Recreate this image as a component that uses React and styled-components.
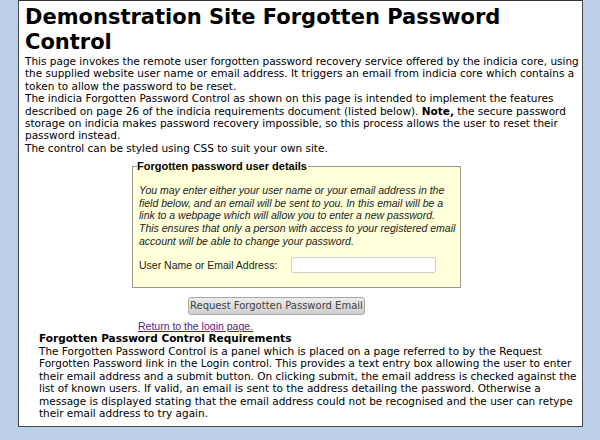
import React from 'react'
import styled, { createGlobalStyle } from 'styled-components'

const GlobalStyle = createGlobalStyle`
  html, body {
    margin: 0;
    padding: 0;
    background: #bccfe9;
  }
  body {
    font-family: "DejaVu Sans", sans-serif;
  }
`

const Page = styled.div`
  width: 600px;
  height: 440px;
  overflow: hidden;
`

const Panel = styled.div`
  margin-left: 18px;
  width: 555px;
  background: #fff;
  border: 1px solid #4a4a4a;
  border-top-color: #333;
  padding: 4px 2px 7px 6px;
`

const Title = styled.h1`
  margin: 0;
  font-size: 21px;
  line-height: 25px;
  font-weight: bold;
  color: #000;
`

const Text = styled.div`
  font-size: 10.5px;
  line-height: 12.4px;
  color: #000;
`

const Details = styled.fieldset`
  width: 316px;
  margin: 6px 0 0 107px;
  padding: 6px 5px 14px 6px;
  background: #ffffd9;
  border: 1px solid #9a9a8a;
  font-family: "Liberation Sans", Arial, sans-serif;
  font-size: 10.5px;
  line-height: 12.7px;
`

const Legend = styled.legend`
  font-weight: bold;
  font-size: 11px;
  padding: 0 1px 0 0;
  margin-left: -2px;
  color: #000;
`

const Help = styled.p`
  margin: 5px 0 10px 0;
  font-style: italic;
  white-space: nowrap;
  color: #222;
`

const Field = styled.div`
  display: flex;
  align-items: center;
  gap: 14px;
  color: #222;
`

const Input = styled.input`
  width: 139px;
  height: 12px;
  padding: 1px 2px;
  border: 1px solid #cfcfcf;
  border-radius: 2px;
  background: #fff;
`

const ButtonRow = styled.div`
  padding: 6px 0 0 163px;
`

const Button = styled.button`
  font-family: "DejaVu Sans", sans-serif;
  font-size: 10px;
  line-height: 12px;
  color: #444;
  padding: 2px 1px;
  border: 1px solid #a8a8a8;
  border-radius: 3px;
  background: linear-gradient(#ececec, #cfcfcf);
`

const LinkRow = styled.div`
  padding: 5px 0 0 113px;
  font-family: "Liberation Sans", Arial, sans-serif;
  font-size: 10.5px;
  line-height: 12px;
`

const Link = styled.a`
  color: #551a8b;
  text-decoration: underline;
`

const Requirements = styled.div`
  margin-left: 14px;
`

const SubTitle = styled.div`
  font-size: 10.5px;
  line-height: 12.4px;
  font-weight: bold;
`

const Strong = styled.span`
  font-weight: bold;
`

export default function App() {
  return (
    <Page>
      <GlobalStyle />
      <Panel>
        <Title>Demonstration Site Forgotten Password Control</Title>
        <Text>
          This page invokes the remote user forgotten password recovery service offered by the indicia core, using
          the supplied website user name or email address. It triggers an email from indicia core which contains a
          token to allow the password to be reset.
        </Text>
        <Text>
          The indicia Forgotten Password Control as shown on this page is intended to implement the features
          described on page 26 of the indicia requirements document (listed below). <Strong>Note,</Strong> the secure
          password storage on indicia makes password recovery impossible, so this process allows the user to reset
          their password instead.
        </Text>
        <Text>The control can be styled using CSS to suit your own site.</Text>

        <Details>
          <Legend>Forgotten password user details</Legend>
          <Help>
            You may enter either your user name or your email address in the
            <br />
            field below, and an email will be sent to you. In this email will be a
            <br />
            link to a webpage which will allow you to enter a new password.
            <br />
            This ensures that only a person with access to your registered email
            <br />
            account will be able to change your password.
          </Help>
          <Field>
            <span>User Name or Email Address:</span>
            <Input type="text" />
          </Field>
        </Details>

        <ButtonRow>
          <Button type="button">Request Forgotten Password Email</Button>
        </ButtonRow>
        <LinkRow>
          <Link href="#">Return to the login page.</Link>
        </LinkRow>

        <Requirements>
          <SubTitle>Forgotten Password Control Requirements</SubTitle>
          <Text>
            The Forgotten Password Control is a panel which is placed on a page referred to by the Request
            Forgotten Password link in the Login control. This provides a text entry box allowing the user to enter
            their email address and a submit button. On clicking submit, the email address is checked against the
            list of known users. If valid, an email is sent to the address detailing the password. Otherwise a
            message is displayed stating that the email address could not be recognised and the user can retype
            their email address to try again.
          </Text>
        </Requirements>
      </Panel>
    </Page>
  )
}
